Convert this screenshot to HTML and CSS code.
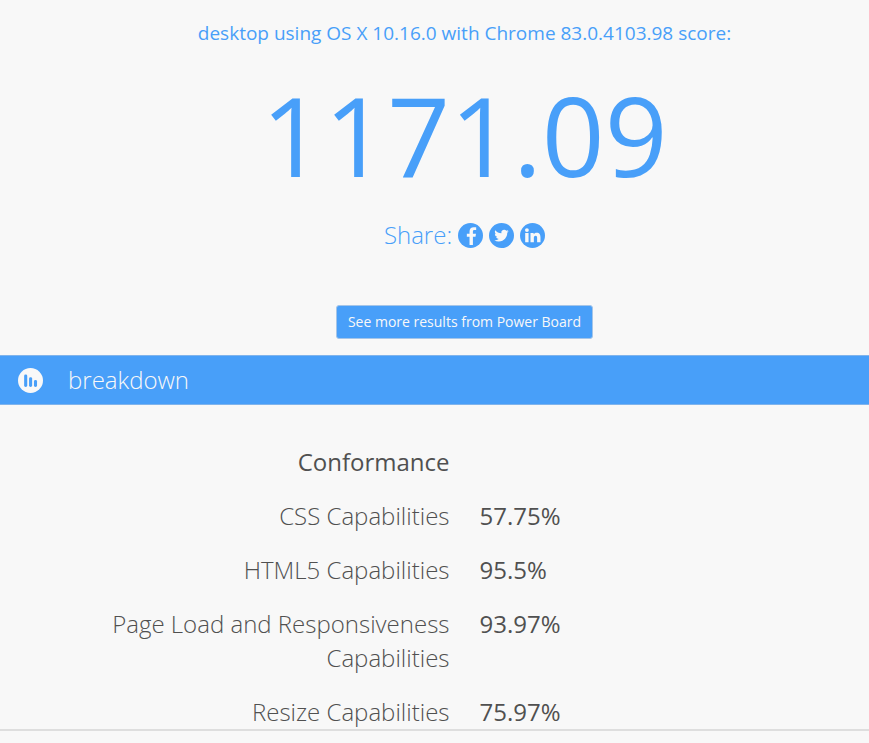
FILE: index.html
```html
<!DOCTYPE html>
<html lang="en">
<head>
<meta charset="utf-8">
<meta name="viewport" content="width=device-width, initial-scale=1">
<title>Benchmark results</title>
<link rel="stylesheet" href="styles.css">
</head>
<body>
<main>
  <section class="summary">
    <h1 class="summary-title">desktop using OS X 10.16.0 with Chrome 83.0.4103.98 score:</h1>
    <p class="score">1171.09</p>
    <div class="share">
      <span>Share:</span>
      <a href="#" aria-label="Facebook"><svg class="icon" viewBox="0 0 26 26"><circle cx="13" cy="13" r="13" fill="#489ff9"/><path d="M12 23v-8.6H9.2v-3.2H12V8.8c0-3 1.7-4.5 4.4-4.5 1.2 0 2.2.1 2.5.2v2.9h-1.7c-1.4 0-1.7.7-1.7 1.7v2.1h3.2l-.5 3.2h-2.7V23z" fill="#f8f8f8"/></svg></a>
      <a href="#" aria-label="Twitter"><svg class="icon" viewBox="0 0 26 26"><circle cx="13" cy="13" r="13" fill="#489ff9"/><path transform="translate(5.5 5.6) scale(.625)" d="M23.95 4.57a10 10 0 0 1-2.82.77 4.96 4.96 0 0 0 2.16-2.72c-.95.55-2 .96-3.13 1.18a4.92 4.92 0 0 0-8.38 4.48C7.69 8.1 4.07 6.13 1.64 3.16a4.82 4.82 0 0 0-.67 2.48c0 1.7.87 3.21 2.19 4.1a4.9 4.9 0 0 1-2.23-.62v.06a4.92 4.92 0 0 0 3.95 4.83 5 5 0 0 1-2.21.08 4.94 4.94 0 0 0 4.6 3.42A9.87 9.87 0 0 1 0 19.54a14 14 0 0 0 7.55 2.21c9.05 0 14-7.5 14-13.98l-.01-.64a9.94 9.94 0 0 0 2.41-2.56z" fill="#f8f8f8"/></svg></a>
      <a href="#" aria-label="LinkedIn"><svg class="icon" viewBox="0 0 26 26"><circle cx="13" cy="13" r="13" fill="#489ff9"/><g fill="#f8f8f8"><circle cx="7.2" cy="7.4" r="2"/><path d="M5.4 10.5h3.5v9.5H5.4zM10.9 10.5h3.3v1.3c.6-1 1.7-1.6 3.1-1.6 3.1 0 4 1.9 4 4.7V20h-3.5v-4.5c0-1.3-.2-2.3-1.6-2.3s-1.8 1-1.8 2.3V20h-3.5z"/></g></svg></a>
    </div>
    <button class="more" type="button">See more results from Power Board</button>
  </section>

  <section>
    <h2 class="section-bar">
      <svg class="icon" viewBox="0 0 26 26" aria-hidden="true"><circle cx="13" cy="13" r="13" fill="#f8f8f8"/><g fill="#489ff9"><rect x="6.4" y="6.8" width="3.2" height="13" rx="1.5"/><rect x="11.5" y="9.5" width="3.2" height="10.3" rx="1.5"/><rect x="16.6" y="12.6" width="3.2" height="7.2" rx="1.5"/></g></svg>
      <span>breakdown</span>
    </h2>
    <table class="results">
      <thead>
        <tr><th class="group" scope="col">Conformance</th><td></td></tr>
      </thead>
      <tbody>
        <tr><th scope="row">CSS Capabilities</th><td>57.75%</td></tr>
        <tr><th scope="row">HTML5 Capabilities</th><td>95.5%</td></tr>
        <tr><th scope="row">Page Load and Responsiveness Capabilities</th><td>93.97%</td></tr>
        <tr><th scope="row">Resize Capabilities</th><td>75.97%</td></tr>
      </tbody>
    </table>
  </section>
</main>
</body>
</html>
```
FILE: styles.css
```css
* {
  box-sizing: border-box;
}

body {
  margin: 0;
  background: #f8f8f8;
  color: #505050;
  font: 300 24px/34px "Open Sans", sans-serif;
}

.summary {
  display: flex;
  flex-direction: column;
  align-items: center;
  padding: 18px 0 16px 60px;
  color: #489ff9;
  text-align: center;
}

.summary-title {
  margin: 0;
  font-size: 19px;
  font-weight: 400;
  line-height: 30px;
}

.score {
  margin: 26px 0 24px;
  font-size: 110px;
  font-weight: 400;
  line-height: 120px;
}

.share {
  display: flex;
  align-items: center;
  gap: 6px;
  margin-bottom: 53px;
}

.share a {
  display: flex;
}

.icon {
  flex: none;
  width: 25px;
  height: 25px;
}

.more {
  padding: 5px 11px;
  border: 1px solid #a5c5e8;
  border-radius: 3px;
  background: #489ff9;
  color: #f8f8f8;
  font: 400 14px/22px "Open Sans", sans-serif;
}

.section-bar {
  display: flex;
  align-items: center;
  gap: 25px;
  margin: 0;
  padding: 7px 18px;
  border-top: 1px solid #80b4ec;
  border-bottom: 1px solid #80b4ec;
  background: #489ff9;
  color: #f8f8f8;
  font-size: 24px;
  font-weight: 300;
}

.results {
  width: 100%;
  padding: 30px 0 0 60px;
  border-bottom: 2px solid #dedede;
  border-spacing: 0;
  table-layout: fixed;
}

.results th,
.results td {
  padding: 10px 15px;
  text-align: left;
  vertical-align: top;
}

.results th {
  font-weight: 300;
  text-align: right;
}

.results .group,
.results td {
  font-weight: 400;
}

.results tbody tr:last-child th,
.results tbody tr:last-child td {
  padding-bottom: 0;
}
```
